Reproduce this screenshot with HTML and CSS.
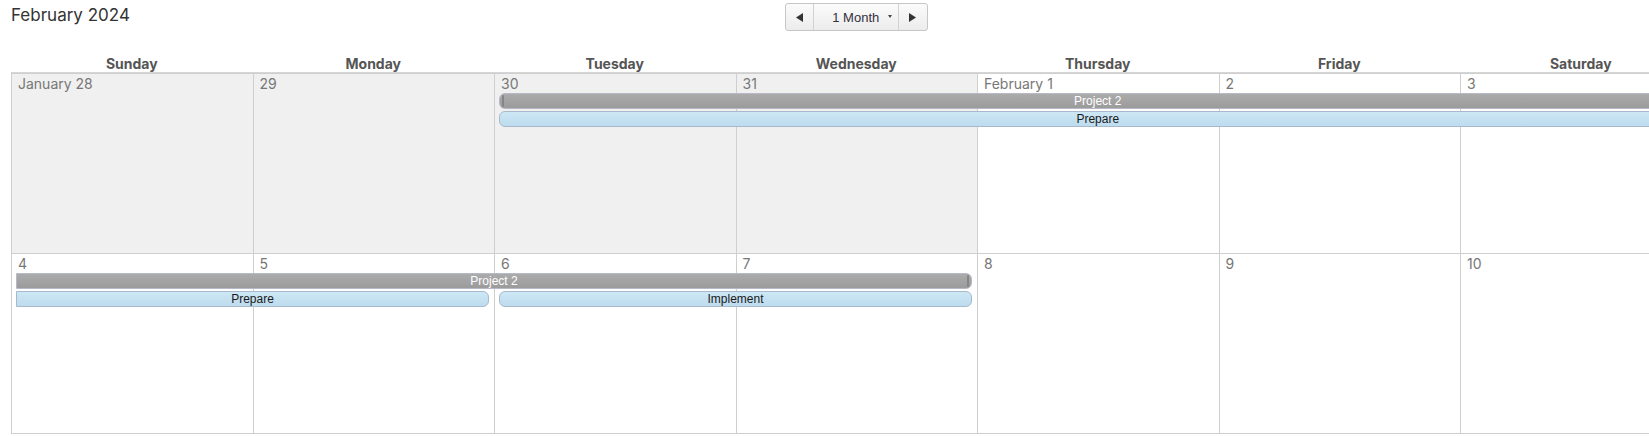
FILE: index.html
```html
<!DOCTYPE html>
<html lang="en">
<head>
    <meta charset="UTF-8">
    <meta name="viewport" content="width=device-width, initial-scale=1.0">
    <title>Project Calendar</title>
    <link rel="stylesheet" href="styles.css">
</head>
<body>
    <div class="calendar">
        <div class="toolbar">
            <h1 class="month-title">February 2024</h1>
            <div class="nav">
                <div class="nav-btn prev">
                    <svg width="7" height="9" viewBox="0 0 7 9"><polygon points="7,0 7,9 0,4.5" fill="#333"/></svg>
                </div>
                <div class="nav-btn range">
                    1 Month
                    <span class="caret"></span>
                </div>
                <div class="nav-btn next">
                    <svg width="7" height="9" viewBox="0 0 7 9"><polygon points="0,0 0,9 7,4.5" fill="#333"/></svg>
                </div>
            </div>
        </div>

        <div class="weekdays">
            <div>Sunday</div>
            <div>Monday</div>
            <div>Tuesday</div>
            <div>Wednesday</div>
            <div>Thursday</div>
            <div>Friday</div>
            <div>Saturday</div>
        </div>

        <div class="month">
            <div class="week">
                <div class="day other">January 28</div>
                <div class="day other">29</div>
                <div class="day other">30</div>
                <div class="day other">31</div>
                <div class="day">February 1</div>
                <div class="day">2</div>
                <div class="day">3</div>

                <div class="event project start lane-1 col-3-8">Project 2</div>
                <div class="event task start lane-2 col-3-8">Prepare</div>
            </div>

            <div class="week">
                <div class="day">4</div>
                <div class="day">5</div>
                <div class="day">6</div>
                <div class="day">7</div>
                <div class="day">8</div>
                <div class="day">9</div>
                <div class="day">10</div>

                <div class="event project end lane-1 col-1-5">Project 2</div>
                <div class="event task end lane-2 col-1-3">Prepare</div>
                <div class="event task start end lane-2 col-3-5">Implement</div>
            </div>
        </div>
    </div>
</body>
</html>
```

FILE: styles.css
```css
body {
    font-family: 'Inter', 'Liberation Sans', sans-serif;
    background: #fff;
    margin: 0;
    padding: 0 0 0 11px;
    overflow: hidden;
}

.calendar {
    width: 1690.5px;
}

.toolbar {
    display: grid;
    grid-template-columns: 1fr auto 1fr;
    align-items: start;
    height: 55px;
}

.month-title {
    margin: 5px 0 0 0;
    font-size: 17px;
    line-height: 20px;
    font-weight: 400;
    color: #333;
}

.nav {
    display: flex;
    margin-top: 3px;
    height: 28px;
    box-sizing: border-box;
    border: 1px solid #c6c6c6;
    border-radius: 3px;
    background: linear-gradient(#fbfbfb, #ececec);
}

.nav-btn {
    display: flex;
    align-items: center;
    justify-content: center;
    font-family: 'Liberation Sans', sans-serif;
    font-size: 13px;
    color: #353040;
}

.nav-btn.prev {
    width: 27px;
}

.nav-btn.range {
    position: relative;
    width: 84px;
    border-left: 1px solid #d2d2d2;
    border-right: 1px solid #d2d2d2;
}

.nav-btn.next {
    width: 28px;
}

.caret {
    position: absolute;
    right: 6px;
    top: 11px;
    border-left: 2.5px solid transparent;
    border-right: 2.5px solid transparent;
    border-top: 3px solid #444;
}

.weekdays {
    display: grid;
    grid-template-columns: repeat(7, 241.5px);
    height: 17px;
    line-height: 17px;
    border-bottom: 1px solid #d6d6d6;
    text-align: center;
    font-size: 14px;
    font-weight: 700;
    color: #555;
}

.month {
    border-bottom: 1px solid #cfcfcf;
}

.week {
    display: grid;
    grid-template-columns: repeat(7, 241.5px);
    grid-template-rows: 19px 18px 18px 1fr;
    height: 180px;
    box-sizing: border-box;
    border-top: 1px solid #cfcfcf;
}

.day {
    grid-row: 1 / -1;
    border-left: 1px solid #cfcfcf;
    padding: 0 0 0 6px;
    font-size: 14px;
    line-height: 19px;
    color: #777;
    background: #fff;
}

.day.other {
    background: #f0f0f0;
}

.day:nth-child(1) { grid-column: 1; }
.day:nth-child(2) { grid-column: 2; }
.day:nth-child(3) { grid-column: 3; }
.day:nth-child(4) { grid-column: 4; }
.day:nth-child(5) { grid-column: 5; }
.day:nth-child(6) { grid-column: 6; }
.day:nth-child(7) { grid-column: 7; }

.event {
    position: relative;
    height: 16px;
    box-sizing: border-box;
    margin: 0 5px;
    border: 1px solid;
    font-family: 'Liberation Sans', sans-serif;
    font-size: 12px;
    line-height: 14px;
    text-align: center;
    white-space: nowrap;
    overflow: hidden;
}

.lane-1 { grid-row: 2; }
.lane-2 { grid-row: 3; }

.col-1-3 { grid-column: 1 / 3; }
.col-1-5 { grid-column: 1 / 5; }
.col-3-5 { grid-column: 3 / 5; }
.col-3-8 { grid-column: 3 / 8; }

.event.project {
    background: linear-gradient(#ababab, #9b9b9b);
    border-color: #b6bac6;
    color: #fff;
}

.event.task {
    background: linear-gradient(#cde7f5, #bddcee);
    border-color: #a9b9cc;
    color: #1a1a1a;
}

.event.start {
    border-top-left-radius: 6px;
    border-bottom-left-radius: 6px;
}

.event.end {
    border-top-right-radius: 6px;
    border-bottom-right-radius: 6px;
}

/* drag handles on the project bar ends */
.event.project.start::before,
.event.project.end::after {
    content: '';
    position: absolute;
    top: 1px;
    bottom: 1px;
    width: 2px;
    border-radius: 2px;
    background: #858585;
}

.event.project.start::before {
    left: 2px;
}

.event.project.end::after {
    right: 2px;
}
```
